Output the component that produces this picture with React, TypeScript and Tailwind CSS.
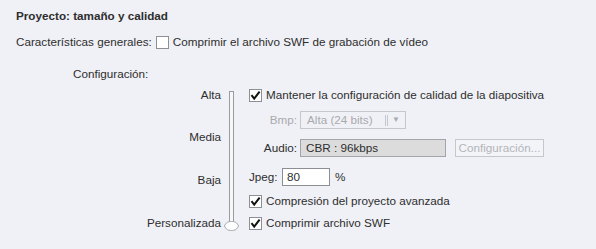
import React from "react";

const font = { fontFamily: '"Liberation Sans", Arial, sans-serif' };

function Check({ checked }: { checked: boolean }) {
  return (
    <svg width="13" height="13" viewBox="0 0 13 13" className="shrink-0">
      <rect x="0.5" y="0.5" width="12" height="12" fill="#ffffff" stroke="#8e8f94" />
      {checked && (
        <path d="M2.5 6.2 L5.2 9.6 L10.6 2.6" fill="none" stroke="#111" strokeWidth="2" />
      )}
    </svg>
  );
}

function Slider() {
  return (
    <svg width="28" height="144" viewBox="0 0 28 144">
      <rect x="8.5" y="4.5" width="4" height="132" fill="#f7f7f9" stroke="#9a9ba0" />
      <path
        d="M3.5 139 C5 135.5 7 134.5 10.5 134.5 C14 134.5 16 135.5 17.5 139 C16 142.5 14 143.5 10.5 143.5 C7 143.5 5 142.5 3.5 139 Z"
        fill="#ffffff"
        stroke="#a5a6ab"
      />
    </svg>
  );
}

export default function App() {
  return (
    <div
      className="w-[596px] h-[249px] bg-[#f0f1f6] text-[#2e2e2e] text-[11.7px] leading-[16px] overflow-hidden"
      style={font}
    >
      <div className="pl-[16px] pt-[8px] font-bold h-[16px]">Proyecto: tamaño y calidad</div>
      <div className="pl-[16px] mt-[18px] flex items-center h-[16px]">
        <span>Características generales:</span>
        <span className="ml-[4px] mr-[4px]">
          <Check checked={false} />
        </span>
        <span>Comprimir el archivo SWF de grabación de vídeo</span>
      </div>
      <div className="pl-[73px] mt-[16px] h-[16px]">Configuración:</div>
      <div className="mt-[5px] flex">
        <div className="w-[221px] flex flex-col items-end">
          <div className="h-[16px]">Alta</div>
          <div className="h-[16px] mt-[26px]">Media</div>
          <div className="h-[16px] mt-[27px]">Baja</div>
          <div className="h-[16px] mt-[27px]">Personalizada</div>
        </div>
        <div className="w-[28px]">
          <Slider />
        </div>
        <div className="flex flex-col">
          <div className="h-[16px] flex items-center gap-[4px]">
            <Check checked />
            <span>Mantener la configuración de calidad de la diapositiva</span>
          </div>
          <div className="h-[18px] mt-[8px] flex items-center">
            <span className="w-[48px] text-right text-[#a9aaae]">Bmp:</span>
            <div className="ml-[3px] w-[106px] h-[18px] border border-[#c6c7cc] flex items-center text-[#a9aaae]">
              <span className="pl-[6px] flex-1">Alta (24 bits)</span>
              <span className="w-[3px] h-[11px] border-l border-r border-[#c6c7cc] mr-[4px]"></span>
              <span className="text-[8px] mr-[5px]">▼</span>
            </div>
          </div>
          <div className="h-[18px] mt-[10px] flex items-center">
            <span className="w-[48px] text-right">Audio:</span>
            <div className="ml-[3px] w-[146px] h-[18px] border border-[#a3a4a8] bg-[#dcdcdc] flex items-center">
              <span className="pl-[5px]">CBR : 96kbps</span>
            </div>
            <div className="ml-[9px] w-[89px] h-[18px] border border-[#c6c7cc] bg-[#f3f4f8] flex items-center justify-center text-[#b3b4b8]">
              Configuración...
            </div>
          </div>
          <div className="h-[18px] mt-[11px] flex items-center">
            <span className="w-[33px]">Jpeg:</span>
            <div className="w-[48px] h-[18px] border border-[#8d8e93] bg-white flex items-center">
              <span className="pl-[4px]">80</span>
            </div>
            <span className="ml-[5px]">%</span>
          </div>
          <div className="h-[16px] mt-[7px] flex items-center gap-[4px]">
            <Check checked />
            <span>Compresión del proyecto avanzada</span>
          </div>
          <div className="h-[16px] mt-[6px] flex items-center gap-[4px]">
            <Check checked />
            <span>Comprimir archivo SWF</span>
          </div>
        </div>
      </div>
    </div>
  );
}
